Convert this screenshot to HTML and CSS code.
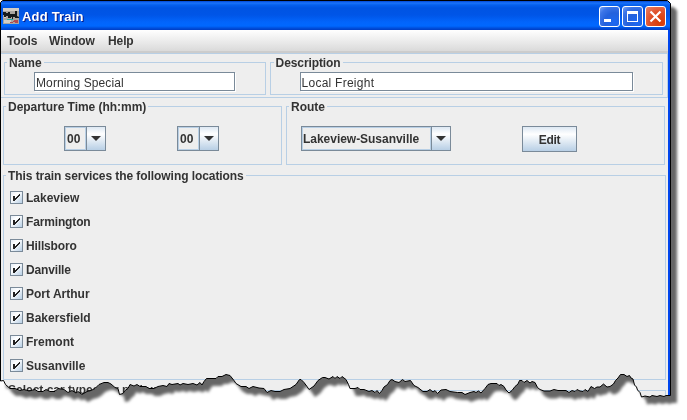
FILE: index.html
```html
<!DOCTYPE html>
<html lang="en">
<head>
<meta charset="utf-8">
<title>Add Train</title>
<link rel="stylesheet" href="styles.css">
</head>
<body>
<svg class="defs" width="0" height="0" aria-hidden="true">
  <defs>
    <path id="sheet" d="M.5 381V2.5L2.5.5H667.5L670.5 3.5V395.5H666L664 396.5 660 395.5 657 396.5 652 395.5 650 397 645 396 641.500 397 640 392.500 637.500 390 636.500 387 634.500 385 633 379 631 378 629.500 375.500 627 376.500 624 374.500H620.500L618 378 615.500 380.500 613.500 384 610 386.500 607 387 603.500 384 600 387H597L594.500 388.500 591 386.500 589.500 389 588 391.500 585 389.500 583 391.500 580 391 577 389.500 575 391.500 572 390.500 569 392.500 566 390.500H558L554 389.500 550 391H544L540 389.500 537.500 387.500 535 382.500 532 381.500 530 383 527 380.500 524 382.500 522 380.500 519.500 380.500 518 384 515 386.500 512 390.500 509 393 506 390 504 386.500 501 384.500 499 385.500 497 383.500H491L488 384.500 485 388.500 481 393 478.500 391 476 392.500 474 391.500 470 392.500 465 394.500 462 392.500H457.500L450 391.500 446 389.500 441 390 437.500 393.500 435 390.500 433 392 430 389.500 427 391.500 423 391.500 418 387.500 414 385.500 410.500 380.500 405 381.500 402.500 379.500 399 382.500 395 381.500 392 379.500 390 380.500 387.500 384.500 384 387 382 390.500 379.500 393.500 377 390.500 375 392.500 372 390.500 369 391.500 364 389.500 360 389.500 358 387.500 355 388.500H350L348.500 384.500 346 379.500 342 376.500 340 378.500 337 376.500 335 378.500 333 376.500 329 379 325 377.500 322.500 377.500 318 380.500 314 386 309 389.500 307 386.500 304 382.500 301 379.500H299.500L296 384.500 290 388.500 284 389.500 280 391.500H275L271 390.500 267 392.500 264 388.500 259 388 253 386.500 249 388.500 246 386.500H241L236 383.500 234 380.500 230 375.500 226 374.500 222 376.500 218 376.500 216 378.500H206.500L204 381.500 202 385 200 382.500 197 385 193 383.500 188 384.500 183 383.500 180 385 178 383.500 172 384.500 169 383.500 167 386.500 163 385.500 158 386.500 154 388.500H149L146 386.500H140L137 384.500 134 386 130 384.500 128 388.500 125 390.500 123 393.500 119.500 394.500 118 388.500 115 387.500 111 384 108 382.500H104L99 384.500 95 388.500 91 390.500 87 391.500 82 394.500 78 391.500 76 393 72 390.500 68 392.500 64 389.500 58 388.500 55 391.500 50 391.500 46 389.500 43 391.500 38 391.500 35 389.500 29 391 24 389.500 20 390.500 15 388.500 10 388.500 5.500 384.500 3.500 380.500Z"/>
    <clipPath id="sheet-clip"><use href="#sheet"/></clipPath>
    <symbol id="tick" viewBox="0 0 11 11"><path d="M2 4h2v2h1V5h1V4h1V3h1V2h1v2H8v1H7v1H6v1H5v1H4v1H2z"/></symbol>
  </defs>
</svg>

<div class="shadow">
  <main class="window">
    <header class="titlebar">
      <svg class="app-icon" viewBox="0 0 16 16">
        <path fill="#aaa6a1" d="M0 0h16v16H0z"/>
        <path fill="#d3cdc5" d="M0 0h16v3H0zM1 12h7v3H1zM1 8h2v2H1z"/>
        <path fill="#16191b" d="M0 4h3v1h2V4h2v2h5V3h2v5l2 1v1h-4V9h-2v2H9V9H8v1H5V8H3v1H1V7H0z"/>
        <path fill="#2aa5a3" d="M4 11h6v1H4z"/>
        <path fill="#b34a4f" d="M11 12h4v3h-3v-1h-2v1H7v-1h3v-1h1z"/>
      </svg>
      <h1>Add Train</h1>
      <div class="controls">
        <span class="control"><svg viewBox="0 0 21 21"><path fill="#fff" d="M5 13h7v3H5z"/></svg></span>
        <span class="control"><svg viewBox="0 0 21 21"><path fill="#fff" fill-rule="evenodd" d="M5 5h11v11H5zm1 3v7h9V8z"/></svg></span>
        <span class="control close"><svg viewBox="0 0 21 21"><path fill="none" stroke="#fff" stroke-width="2.200" d="M5.500 5.500l10 10m0-10l-10 10"/></svg></span>
      </div>
    </header>
    <nav class="menu"><span class="tools">Tools</span><span class="win">Window</span><span class="help">Help</span></nav>

    <section class="identity">
      <div class="group name"><span class="legend">Name</span><div class="field">Morning Special</div></div>
      <div class="group description"><span class="legend">Description</span><div class="field">Local Freight</div></div>
    </section>

    <section class="schedule">
      <div class="group departure">
        <span class="legend">Departure Time (hh:mm)</span>
        <div class="line">
          <div class="combo"><span class="value">00</span><span class="arrow"><svg viewBox="0 0 10 5"><path d="M0 0h10L5 5z"/></svg></span></div>
          <div class="combo"><span class="value">00</span><span class="arrow"><svg viewBox="0 0 10 5"><path d="M0 0h10L5 5z"/></svg></span></div>
        </div>
      </div>
      <div class="group route">
        <span class="legend">Route</span>
        <div class="line">
          <div class="combo wide"><span class="value">Lakeview-Susanville</span><span class="arrow"><svg viewBox="0 0 10 5"><path d="M0 0h10L5 5z"/></svg></span></div>
          <div class="button">Edit</div>
        </div>
      </div>
    </section>

    <section class="group locations">
      <span class="legend">This train services the following locations</span>
      <ul>
        <li><svg class="check"><use href="#tick"/></svg>Lakeview</li>
        <li><svg class="check"><use href="#tick"/></svg><span class="farmington">Farmington</span></li>
        <li><svg class="check"><use href="#tick"/></svg><span class="hillsboro">Hillsboro</span></li>
        <li><svg class="check"><use href="#tick"/></svg><span class="danville">Danville</span></li>
        <li><svg class="check"><use href="#tick"/></svg>Port Arthur</li>
        <li><svg class="check"><use href="#tick"/></svg>Bakersfield</li>
        <li><svg class="check"><use href="#tick"/></svg>Fremont</li>
        <li><svg class="check"><use href="#tick"/></svg>Susanville</li>
      </ul>
    </section>
    <section class="group types"><span class="legend">Select car types for pickup</span></section>
  </main>
  <svg class="outline" width="671" height="400"><use href="#sheet"/></svg>
</div>
</body>
</html>
```
FILE: styles.css
```css
* { box-sizing: border-box; }
body {
  margin: 0;
  width: 687px;
  height: 420px;
  overflow: hidden;
  background: #fff;
  color: #333;
  font: bold 12px/14px "Liberation Sans", Arial, sans-serif;
}
.defs { position: absolute; }
.shadow {
  position: relative;
  width: 671px;
  height: 400px;
  filter: drop-shadow(6px 7px 1.5px #666);
}
.window {
  width: 671px;
  height: 400px;
  padding: 1px 3px 0 1px;
  overflow: hidden;
  background: linear-gradient(90deg, #eee 668px, #0046ee 668px);
  clip-path: url(#sheet-clip);
}
.outline {
  position: absolute;
  inset: 0;
  fill: none;
  stroke: #000;
  stroke-width: 1;
}
.titlebar {
  display: flex;
  align-items: center;
  height: 29px;
  margin-right: -3px;
  padding: 2px 5px 0 2px;
  background: linear-gradient(#0046d4 0, #1b73fa 2px, #0560ee 4px, #0054e3 7px, #0055e7 14px, #0265fc 21px, #0068ff 25px, #0050de 27px, #003dc4 29px);
}
.app-icon { width: 16px; height: 16px; margin-top: -1px; }
h1 {
  margin: 0 0 0 3px;
  color: #fff;
  font: bold 13px/16px "Liberation Sans", Arial, sans-serif;
  letter-spacing: .2px;
  text-shadow: 1px 1px 0 #0a1883;
}
.controls { display: flex; gap: 2px; margin-left: auto; }
.control {
  width: 21px;
  height: 21px;
  border: 1px solid #fff;
  border-radius: 3px;
  background: radial-gradient(circle at 75% 80%, #1c68f2, #2461dc 45%, #3c75e8 75%, #7ba5f6);
}
.control svg { display: block; width: 21px; height: 21px; margin: -1px; }
.close { background: radial-gradient(circle at 75% 80%, #d63b05, #df4f28 50%, #e88368); }
.menu {
  display: flex;
  height: 23px;
  padding: 4px 0 0 6px;
  border-bottom: 2px solid #ccc;
  background: linear-gradient(#fff, #dadada);
}
.menu span { white-space: nowrap; }
.tools { width: 42px; letter-spacing: -.2px; }
.win { width: 59px; }
.help { letter-spacing: -.1px; }
.identity {
  display: flex;
  gap: 4px;
  height: 45px;
  padding: 8px 4px 0 3px;
  border: solid #b8cfe5;
  border-width: 1px 1px 1px 0;
}
.group { border: 1px solid #b8cfe5; }
.legend {
  display: table;
  margin: -8px 0 0 2px;
  padding: 0 2px;
  background: #eee;
  line-height: 16px;
  white-space: nowrap;
}
.name { width: 262px; height: 33px; }
.description { width: 394px; height: 33px; }
.description .legend { margin-left: 3px; letter-spacing: -.1px; }
.field {
  height: 19px;
  margin: 1px 0 0 29px;
  padding: 3px 1px 0;
  border: 1px solid #7a8a99;
  background: #fff;
  box-shadow: 1px 1px #fff;
  font-weight: normal;
  white-space: nowrap;
}
.name .field { width: 201px; letter-spacing: .12px; }
.description .field { width: 333px; letter-spacing: .25px; }
.schedule { display: flex; gap: 4px; padding: 8px 0 0 2px; }
.departure { width: 279px; height: 59px; }
.departure .legend { letter-spacing: -.04px; }
.route { width: 379px; height: 59px; }
.line { display: flex; padding-top: 11px; }
.departure .line { gap: 71px; padding-left: 60px; }
.route .line { gap: 71px; padding-left: 14px; }
.combo {
  display: flex;
  width: 42px;
  height: 25px;
  border: 1px solid #7a8a99;
}
.wide { width: 150px; }
.wide .value { letter-spacing: -.03px; }
.value {
  flex: 1;
  padding: 4px 0 0 1px;
  border: 1px solid #b8cfe5;
  white-space: nowrap;
}
.wide .value { padding-left: 0; }
.arrow {
  display: grid;
  flex: none;
  place-items: center;
  width: 19px;
  border-left: 1px solid #7a8a99;
  background: linear-gradient(#dde8f3, #fff 30%, #b8cfe5);
}
.arrow svg { width: 10px; height: 5px; fill: #333; }
.button {
  width: 55px;
  height: 26px;
  padding-top: 6px;
  border: 1px solid #7a8a99;
  background: linear-gradient(#dde8f3, #fff 30%, #b8cfe5);
  text-align: center;
  letter-spacing: -.3px;
}
.locations { width: 663px; height: 205px; margin: 10px 0 0 2px; }
.locations .legend { letter-spacing: -.07px; }
ul { margin: 0; padding: 2px 0 0 6px; list-style: none; }
li { display: flex; align-items: center; gap: 3px; height: 24px; }
.farmington, .hillsboro, .danville { letter-spacing: -.15px; }
.check {
  width: 13px;
  height: 13px;
  margin-top: -1px;
  border: 1px solid #7a8a99;
  background: linear-gradient(135deg, #e4edf6, #fff 35%, #b8cfe5);
  fill: #222;
}
.types { width: 663px; height: 30px; margin: 10px 0 0 2px; }
.types .legend { margin-top: -9px; }
```
